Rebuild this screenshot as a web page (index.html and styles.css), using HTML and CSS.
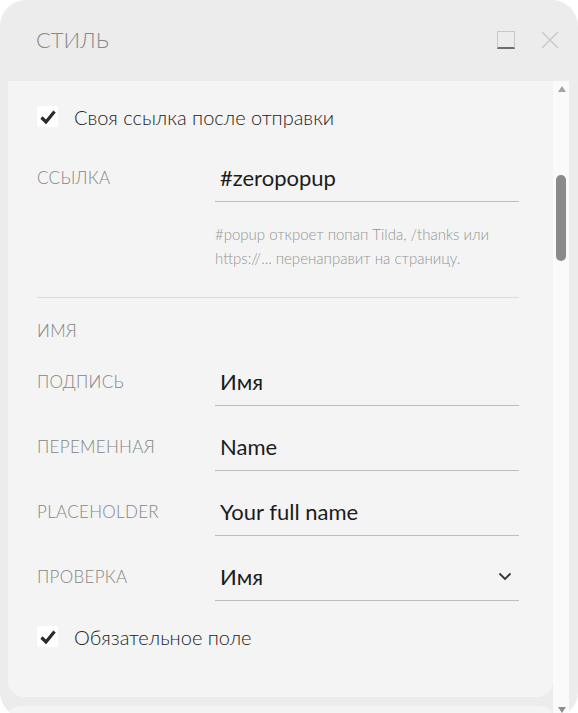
FILE: index.html
```html
<!DOCTYPE html>
<html lang="ru">

<head>
    <meta charset="utf-8">
    <meta name="viewport" content="width=device-width, initial-scale=1.0">
    <title>Стиль</title>
    <link rel="stylesheet" href="styles.css">
</head>

<body>

    <div class="okno">
        <header class="shapka">
            <h1>Стиль</h1>
            <div class="knopki">
                <span class="razvernut"></span>
                <svg class="zakryt" width="18" height="18" viewBox="0 0 18 18">
                    <path d="M1 1 L17 17 M17 1 L1 17" stroke="#c8c8c8" stroke-width="1.4" fill="none" />
                </svg>
            </div>
        </header>

        <div class="prokrutka">
            <div class="paneli">
                <section class="panel">
                    <label class="galka">
                        <span class="kvadrat">
                            <svg width="16" height="14" viewBox="0 0 16 14">
                                <path d="M1.5 7.5 L6 12 L14.5 1.5" stroke="#2b2b2b" stroke-width="3.2" fill="none" stroke-linejoin="miter" />
                            </svg>
                        </span>
                        Своя ссылка после отправки
                    </label>

                    <div class="pole pervoe">
                        <span class="podpis">Ссылка</span>
                        <div class="vvod">#zeropopup</div>
                    </div>
                    <p class="podskazka">#popup откроет попап Tilda, /thanks или<br>https://... перенаправит на страницу.</p>

                    <hr>

                    <h3>Имя</h3>

                    <div class="pole">
                        <span class="podpis">Подпись</span>
                        <div class="vvod">Имя</div>
                    </div>
                    <div class="pole">
                        <span class="podpis">Переменная</span>
                        <div class="vvod">Name</div>
                    </div>
                    <div class="pole">
                        <span class="podpis">Placeholder</span>
                        <div class="vvod">Your full name</div>
                    </div>
                    <div class="pole">
                        <span class="podpis">Проверка</span>
                        <div class="vvod vybor">
                            Имя
                            <svg width="14" height="9" viewBox="0 0 14 9">
                                <path d="M1.5 1.5 L7 7 L12.5 1.5" stroke="#333" stroke-width="1.8" fill="none" />
                            </svg>
                        </div>
                    </div>

                    <label class="galka nizhnyaya">
                        <span class="kvadrat">
                            <svg width="16" height="14" viewBox="0 0 16 14">
                                <path d="M1.5 7.5 L6 12 L14.5 1.5" stroke="#2b2b2b" stroke-width="3.2" fill="none" stroke-linejoin="miter" />
                            </svg>
                        </span>
                        Обязательное поле
                    </label>
                </section>

                <section class="panel sleduyushaya"></section>
            </div>

            <div class="polosa">
                <span class="strelka verh"></span>
                <span class="begunok"></span>
                <span class="strelka niz"></span>
            </div>
        </div>
    </div>

</body>

</html>
```

FILE: styles.css
```css
body {
    margin: 0;
    background-color: #ffffff;
    font-family: Lato, "Open Sans", sans-serif;
    overflow: hidden;
}

.okno {
    width: 578px;
    height: 718px;
    background-color: #ececec;
    border-radius: 26px;
    display: flex;
    flex-direction: column;
    overflow: hidden;
}

/* шапка окна */
.shapka {
    height: 78px;
    padding: 0 19px 3px 36px;
    flex-shrink: 0;
    display: flex;
    align-items: center;
    justify-content: space-between;
}

h1 {
    margin: 0;
    font-size: 22px;
    font-weight: 300;
    text-transform: uppercase;
    color: #8a8a8a;
}

.knopki {
    display: flex;
    align-items: center;
    gap: 26px;
    padding-top: 2px;
}

.razvernut {
    width: 16px;
    height: 15px;
    border: 1px solid #c8c8c8;
    border-bottom: 2px solid #6e6e6e;
}

/* область с прокруткой */
.prokrutka {
    flex: 1;
    display: flex;
    padding: 0 9px 0 8px;
    min-height: 0;
}

.paneli {
    flex: 1;
    display: flex;
    flex-direction: column;
    gap: 9px;
}

.panel {
    background-color: #f4f4f4;
    border-radius: 0 0 16px 16px;
    padding: 25px 34px 50px 29px;
}

.sleduyushaya {
    border-radius: 16px 16px 0 0;
    flex: 1;
    padding: 0;
}

.polosa {
    width: 16px;
    background-color: #fafafa;
    position: relative;
}

.strelka {
    position: absolute;
    left: 5px;
    border-left: 4px solid transparent;
    border-right: 4px solid transparent;
}

.verh {
    top: 5px;
    border-bottom: 6px solid #a3a3a3;
}

.niz {
    bottom: 5px;
    border-top: 6px solid #8e8e8e;
}

.begunok {
    position: absolute;
    left: 3px;
    top: 94px;
    width: 10px;
    height: 86px;
    border-radius: 5px;
    background-color: #8a8a8a;
}

/* галочки */
.galka {
    display: flex;
    align-items: center;
    gap: 16px;
    font-size: 20px;
    font-weight: 300;
    color: #222;
    height: 21px;
}

.kvadrat {
    width: 21px;
    height: 21px;
    background-color: #ffffff;
    border-radius: 3px;
    display: flex;
    align-items: center;
    justify-content: center;
}

.nizhnyaya {
    margin-top: 25px;
}

/* поля формы */
.pole {
    display: grid;
    grid-template-columns: 178px 1fr;
    margin-top: 17px;
}

.pervoe {
    margin-top: 27px;
}

.podpis,
h3 {
    font-size: 17px;
    font-weight: 300;
    text-transform: uppercase;
    letter-spacing: 0.3px;
    color: #858585;
}

.podpis {
    line-height: 47px;
}

.vvod {
    height: 48px;
    line-height: 47px;
    border-bottom: 1px solid #bdbdbd;
    padding-left: 5px;
    font-size: 22px;
    color: #1c1c1c;
    box-sizing: border-box;
}

.vybor {
    display: flex;
    align-items: center;
    justify-content: space-between;
    padding-right: 7px;
}

.podskazka {
    margin: 20px 0 0 178px;
    font-size: 15px;
    line-height: 24px;
    font-weight: 300;
    color: #959595;
}

hr {
    border: none;
    border-top: 1px solid #dcdcdc;
    margin: 27px 0 0;
}

h3 {
    margin: 23px 0 0;
    line-height: 20px;
}
```
